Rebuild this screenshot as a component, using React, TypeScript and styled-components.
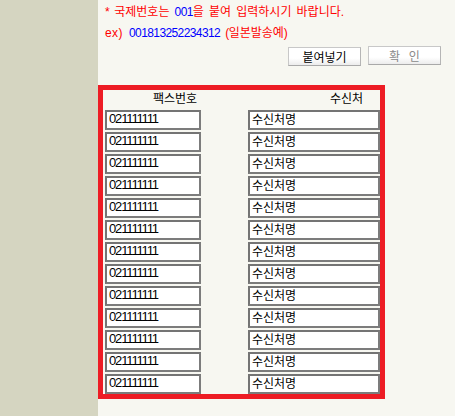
import React from "react";
import styled, { createGlobalStyle } from "styled-components";

const Global = createGlobalStyle`
  html, body { margin: 0; padding: 0; background: #f7f7f1; }
  body { font-family: "Liberation Sans", "Noto Sans CJK KR", sans-serif; }
  * { box-sizing: border-box; }
`;

const Page = styled.div`
  display: flex;
  min-height: 100vh;
  background: #f7f7f1;
`;

const Sidebar = styled.div`
  width: 98px;
  flex: 0 0 98px;
  background: #d5d5c1;
`;

const Main = styled.div`
  flex: 1;
  display: flex;
  flex-direction: column;
  padding-top: 1px;
`;

const Notice = styled.div`
  padding-left: 7px;
  font-family: "Noto Sans CJK KR", sans-serif;
  font-size: 12px;
  line-height: 20px;
  color: #ff0000;
`;

const Line = styled.div`
  white-space: pre;
`;

const Half = styled.span<{ $blue?: boolean; $wide?: boolean }>`
  font-family: "Liberation Sans", sans-serif;
  letter-spacing: ${(p) => (p.$wide ? "0.4px" : "-0.6px")};
  word-spacing: 2.4px;
  color: ${(p) => (p.$blue ? "#0000ff" : "inherit")};
`;

const ButtonRow = styled.div`
  display: flex;
  justify-content: flex-end;
  align-items: flex-start;
  gap: 7px;
  padding-right: 14px;
  margin-top: 3px;
`;

const Btn = styled.button<{ $muted?: boolean; $drop?: number }>`
  width: 73px;
  height: 19px;
  margin-top: ${(p) => p.$drop ?? 0}px;
  padding: 0;
  border: 1px solid #c8c8c8;
  border-bottom-color: #a9a9a9;
  border-right-color: #b5b5b5;
  background: linear-gradient(#ffffff 0%, #ffffff 60%, #ececec 100%);
  font-family: "Noto Sans CJK KR", sans-serif;
  font-size: 12px;
  line-height: 16px;
  color: ${(p) => (p.$muted ? "#8a8a8a" : "#000000")};
  word-spacing: ${(p) => (p.$muted ? "6px" : "0")};
`;

const Box = styled.div`
  width: 287px;
  margin-top: 19px;
  border: 5px solid #ed1c24;
  display: grid;
  grid-template-columns: 145px 132px;
  row-gap: 2px;
  background: #f7f7f1;
`;

const HeaderCell = styled.div<{ $indent: number }>`
  height: 18px;
  padding-left: ${(p) => p.$indent}px;
  font-family: "Noto Sans CJK KR", sans-serif;
  font-size: 12px;
  line-height: 16px;
  color: #000;
  white-space: nowrap;
`;

const Cell = styled.div<{ $pad: number }>`
  padding-left: ${(p) => p.$pad}px;
  display: flex;
`;

const Field = styled.input<{ $w: number; $narrow?: boolean }>`
  width: ${(p) => p.$w}px;
  height: 20px;
  margin: 0;
  border: 2px solid #7c7c7c;
  border-top-color: #747474;
  border-left-color: #747474;
  background: #ffffff;
  padding: 0 2px 3px 2px;
  font-family: ${(p) =>
    p.$narrow
      ? `"Liberation Sans", "Noto Sans CJK KR", sans-serif`
      : `"Noto Sans CJK KR", sans-serif`};
  font-size: ${(p) => (p.$narrow ? 13 : 12)}px;
  letter-spacing: ${(p) => (p.$narrow ? "-1.15px" : "0")};
  line-height: 13px;
  color: #000;
  outline: none;
`;

type Run = { text: string; blue?: boolean; wide?: boolean };

function Mixed({ runs }: { runs: Run[] }) {
  const out: React.ReactNode[] = [];
  runs.forEach((run, ri) => {
    run.text.split(/([\x00-\x7F]+)/).forEach((part, pi) => {
      if (!part) return;
      const key = `${ri}-${pi}`;
      if (/^[\x00-\x7F]+$/.test(part)) {
        out.push(
          <Half key={key} $blue={run.blue} $wide={run.wide}>
            {part}
          </Half>
        );
      } else {
        out.push(<React.Fragment key={key}>{part}</React.Fragment>);
      }
    });
  });
  return <>{out}</>;
}

const rows = Array.from({ length: 13 }, (_, i) => i);

export default function App() {
  return (
    <>
      <Global />
      <Page>
        <Sidebar />
        <Main>
          <Notice>
            <Line>
              <Mixed
                runs={[
                  { text: "* 국제번호는 " },
                  { text: "001", blue: true },
                  { text: "을 붙여 입력하시기 바랍니다." },
                ]}
              />
            </Line>
            <Line>
              <Mixed
                runs={[
                  { text: "ex) ", wide: true },
                  { text: "001813252234312", blue: true },
                  { text: " (일본발송예)" },
                ]}
              />
            </Line>
          </Notice>
          <ButtonRow>
            <Btn $drop={1}>붙여넣기</Btn>
            <Btn $muted>확 인</Btn>
          </ButtonRow>
          <Box>
            <HeaderCell $indent={50}>팩스번호</HeaderCell>
            <HeaderCell $indent={82}>수신처</HeaderCell>
            {rows.map((i) => (
              <React.Fragment key={i}>
                <Cell $pad={2}>
                  <Field $w={96} $narrow defaultValue="021111111" />
                </Cell>
                <Cell $pad={0}>
                  <Field $w={132} defaultValue="수신처명" />
                </Cell>
              </React.Fragment>
            ))}
          </Box>
        </Main>
      </Page>
    </>
  );
}
